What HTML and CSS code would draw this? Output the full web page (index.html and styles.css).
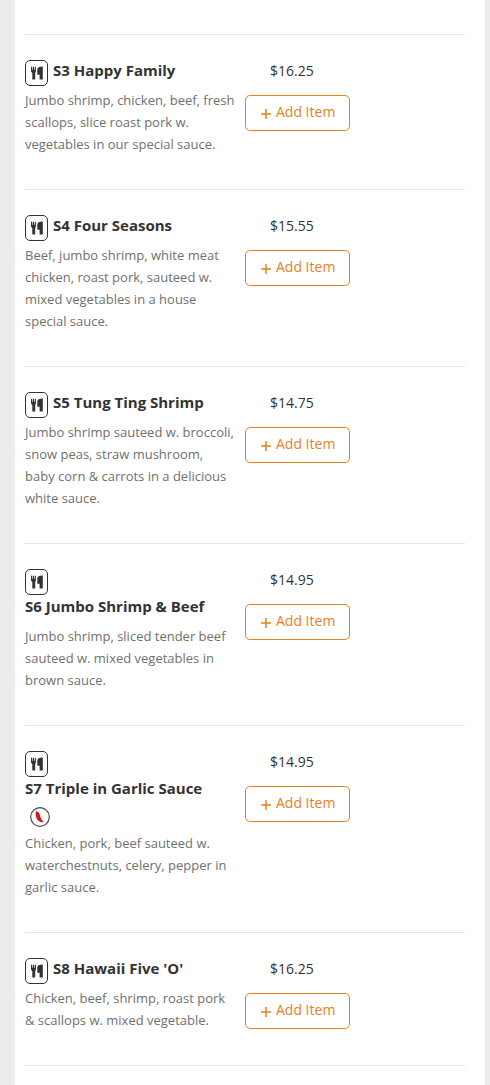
FILE: index.html
```html
<!DOCTYPE html>
<html lang="en">
<head>
<meta charset="utf-8">
<meta name="viewport" content="width=device-width, initial-scale=1">
<title>Menu</title>
<link rel="stylesheet" href="styles.css">
</head>
<body>
<svg class="defs" aria-hidden="true">
  <symbol id="utensils" viewBox="0 0 12 14">
    <path d="M0 .8h1l.3 3.200h.5V.8h1.200V4h.5L3.900.8h1v4.700L4.200 7.300v6.200H1.300V7.300L0 5.500zM11.800.5v13H8.600V8.700H6.300V3.600C6.300 1.500 8 .5 11.800.5z"/>
  </symbol>
  <symbol id="chili" viewBox="0 0 20 20">
    <circle cx="10" cy="10" r="9.300" fill="#fff" stroke="#444b50" stroke-width="1.200"/>
    <path d="M5.800 5.200C6.800 4.300 8.300 4.700 9 6c.8 1.300.9 2.500 1.400 4 .6 1.800 1.600 3.400 3.400 5-3.400.6-6-1-7.200-3.800-.8-2-1.200-4.200-.8-6z" fill="#d8101c"/>
    <path d="M5.400 3.800l1.600 1.400" stroke="#666" stroke-width=".8"/>
  </symbol>
  <symbol id="plus" viewBox="0 0 12 12">
    <path d="M6 1v10M1 6h10" stroke="currentColor" stroke-width="1.500"/>
  </symbol>
</svg>
<main class="menu">
  <article class="item">
    <div class="info">
      <div class="heading"><span class="badge"><svg><use href="#utensils"/></svg></span><h2 class="name">S3 Happy Family</h2></div>
      <p class="description">Jumbo shrimp, chicken, beef, fresh scallops, slice roast pork w. vegetables in our special sauce.</p>
    </div>
    <div class="order"><span class="price">$16.25</span><button class="add" type="button"><svg><use href="#plus"/></svg>Add Item</button></div>
  </article>
  <article class="item">
    <div class="info">
      <div class="heading"><span class="badge"><svg><use href="#utensils"/></svg></span><h2 class="name">S4 Four Seasons</h2></div>
      <p class="description">Beef, jumbo shrimp, white meat chicken, roast pork, sauteed w. mixed vegetables in a house special sauce.</p>
    </div>
    <div class="order"><span class="price">$15.55</span><button class="add" type="button"><svg><use href="#plus"/></svg>Add Item</button></div>
  </article>
  <article class="item">
    <div class="info">
      <div class="heading"><span class="badge"><svg><use href="#utensils"/></svg></span><h2 class="name">S5 Tung Ting Shrimp</h2></div>
      <p class="description">Jumbo shrimp sauteed w. broccoli, snow peas, straw mushroom, baby corn &amp; carrots in a delicious white sauce.</p>
    </div>
    <div class="order"><span class="price">$14.75</span><button class="add" type="button"><svg><use href="#plus"/></svg>Add Item</button></div>
  </article>
  <article class="item">
    <div class="info">
      <div class="heading"><span class="badge"><svg><use href="#utensils"/></svg></span><h2 class="name">S6 Jumbo Shrimp &amp; Beef</h2></div>
      <p class="description">Jumbo shrimp, sliced tender beef sauteed w. mixed vegetables in brown sauce.</p>
    </div>
    <div class="order"><span class="price">$14.95</span><button class="add" type="button"><svg><use href="#plus"/></svg>Add Item</button></div>
  </article>
  <article class="item">
    <div class="info">
      <div class="heading"><span class="badge"><svg><use href="#utensils"/></svg></span><h2 class="name">S7 Triple in Garlic Sauce</h2><svg class="spicy" role="img" aria-label="Spicy"><use href="#chili"/></svg></div>
      <p class="description">Chicken, pork, beef sauteed w. waterchestnuts, celery, pepper in garlic sauce.</p>
    </div>
    <div class="order"><span class="price">$14.95</span><button class="add" type="button"><svg><use href="#plus"/></svg>Add Item</button></div>
  </article>
  <article class="item">
    <div class="info">
      <div class="heading"><span class="badge"><svg><use href="#utensils"/></svg></span><h2 class="name">S8 Hawaii Five 'O'</h2></div>
      <p class="description">Chicken, beef, shrimp, roast pork &amp; scallops w. mixed vegetable.</p>
    </div>
    <div class="order"><span class="price">$16.25</span><button class="add" type="button"><svg><use href="#plus"/></svg>Add Item</button></div>
  </article>
</main>
</body>
</html>
```
FILE: styles.css
```css
* {
  box-sizing: border-box;
}

body {
  margin: 0;
  padding: 0 5px 0 15px;
  background: #ececec;
  color: #333;
  font-family: "Open Sans", sans-serif;
}

.defs {
  display: none;
}

.menu {
  min-height: 100vh;
  padding: 34px 20px 18px 10px;
  background: #fff;
}

.item {
  display: grid;
  grid-template-columns: 1fr 1fr;
  padding: 25px 0 34px;
  border-bottom: 1px solid #e6e6e6;
}

.item:first-child {
  border-top: 1px solid #e6e6e6;
}

.info {
  padding-right: 9px;
}

.heading {
  display: flex;
  flex-wrap: wrap;
  align-items: flex-start;
  gap: 1px 5px;
  margin-bottom: 3px;
  padding-right: 10px;
}

.badge {
  display: flex;
  align-items: center;
  justify-content: center;
  width: 23px;
  height: 26px;
  border: 1px solid #333;
  border-radius: 5px;
}

.badge svg {
  width: 12px;
  height: 14px;
  fill: #333;
}

.name {
  margin: 0;
  padding-bottom: 6px;
  font-size: 15px;
  font-weight: 700;
  line-height: 20px;
  white-space: nowrap;
}

.spicy {
  width: 20px;
  height: 24px;
  margin-left: 5px;
}

.description {
  margin: 0;
  color: #707070;
  font-size: 13px;
  line-height: 22px;
}

.order {
  display: flex;
  flex-direction: column;
  align-items: flex-start;
  gap: 14px;
}

.price {
  padding-left: 25px;
  font-size: 14px;
  line-height: 21px;
}

.add {
  display: flex;
  align-items: center;
  gap: 4px;
  padding: 5px 14px 7px;
  border: 1px solid #e8811c;
  border-radius: 5px;
  background: #fff;
  color: #e8811c;
  font: 14px/22px "Open Sans", sans-serif;
}

.add svg {
  width: 12px;
  height: 12px;
  margin-top: 4px;
}
```
